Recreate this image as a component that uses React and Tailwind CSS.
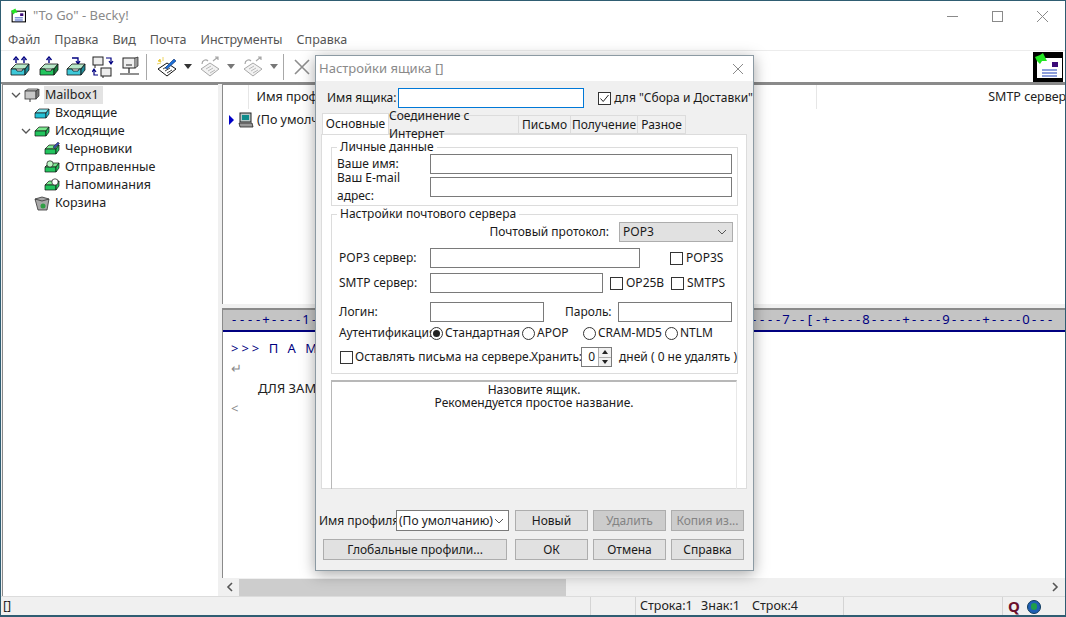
import { Fragment } from "react";

const rulerText = "----+----1----+----2----+----3----+----4----+----5----+----6----+----7--[-+----8----+----9----+----0---";

// 3d tray icon used in the folder tree
function Tray({ color = "#22c55e", top = "#7be88f", children }) {
  return (
    <svg width="16" height="14" viewBox="0 0 16 14" className="shrink-0">
      <path d="M1 7 L5 3 H15 L12 7 Z" fill={top} stroke="#111" strokeWidth="0.7" />
      <path d="M1 7 H12 V12 H1 Z" fill={color} stroke="#111" strokeWidth="0.7" />
      <path d="M12 7 L15 3 V8 L12 12 Z" fill={color} stroke="#111" strokeWidth="0.7" />
      {children}
    </svg>
  );
}

function Chevron() {
  return (
    <svg width="10" height="10" viewBox="0 0 10 10" className="shrink-0">
      <path d="M1 3 L5 7 L9 3" fill="none" stroke="#555" strokeWidth="1.3" />
    </svg>
  );
}

function SmallChevron() {
  return (
    <svg width="10" height="6" viewBox="0 0 10 6">
      <path d="M1 1 L5 5 L9 1" fill="none" stroke="#555" strokeWidth="1" />
    </svg>
  );
}

function ServerIcon({ w = 16 }) {
  return (
    <svg width={w} height={w} viewBox="0 0 16 16" className="shrink-0">
      <path d="M1 4 H12 L14 2 H4 Z" fill="#d8d8d8" stroke="#333" strokeWidth="0.7" />
      <rect x="1" y="4" width="11" height="8" fill="#c8c8c8" stroke="#333" strokeWidth="0.8" />
      <path d="M12 4 L15 2 V9 L12 12 Z" fill="#777" stroke="#333" strokeWidth="0.7" />
      <path d="M6 12 V15" stroke="#333" />
    </svg>
  );
}

function ToolTray({ left, right, arrows }) {
  return (
    <svg width="24" height="22" viewBox="0 0 24 22">
      {arrows}
      <path d="M2 13 L7 8 H20 L16 13 Z" fill="#b8e8c8" stroke="#111" strokeWidth="0.8" />
      <path d="M2 13 H7 L8 15 H13 L14 13 H16 V19 H2 Z" fill={left} stroke="#111" strokeWidth="0.8" />
      <path d="M16 13 L20 8 V14 L16 19 Z" fill={right} stroke="#111" strokeWidth="0.8" />
    </svg>
  );
}

function Up({ x }) {
  return <path d={`M${x} 7 V3 M${x - 2.5} 4 L${x} 1 L${x + 2.5} 4`} fill="none" stroke="#000080" strokeWidth="1.4" />;
}

function PairIcon() {
  return (
    <svg width="22" height="24" viewBox="0 0 22 24">
      <rect x="1" y="2" width="10" height="8" fill="#eee" stroke="#222" />
      <rect x="9" y="13" width="10" height="8" fill="#eee" stroke="#222" />
      <path d="M3 10 V13 M11 21 V23" stroke="#222" />
      <path d="M14 3 H19 V8 M17 6 L19 9 L21 6" fill="none" stroke="#000080" strokeWidth="1.2" />
      <path d="M6 20 H2 V15 M0 17 L2 14 L4 17" fill="none" stroke="#000080" strokeWidth="1.2" />
    </svg>
  );
}

function NetIcon() {
  return (
    <svg width="20" height="22" viewBox="0 0 20 22">
      <rect x="3" y="2" width="12" height="10" fill="#eee" stroke="#222" />
      <path d="M15 2 L18 1 V10 L15 12" fill="#999" stroke="#222" strokeWidth="0.7" />
      <path d="M6 9 H12 M9 12 V17 M0 18 H19" stroke="#222" strokeWidth="1.2" />
    </svg>
  );
}

function NoteIcon({ dim, pen }) {
  const c = dim ? "#a8a8a8" : "#111";
  return (
    <svg width="22" height="22" viewBox="0 0 22 22">
      <path d="M2 13 L11 7 L20 13 L11 20 Z" fill={dim ? "#f2f2f2" : "#fff"} stroke={c} />
      <path d="M7 13 L12 10 M9 15 L14 12 M11 17 L16 14" stroke={c} strokeWidth="0.8" />
      {pen && <path d="M9 12 L18 3 L20 5 L11 13 Z" fill="#1d6fd6" stroke="#0b2f6b" strokeWidth="0.6" />}
      {pen && <path d="M4 3 L5 6 L2 5 Z M7 1 L7 5 M1 8 L5 7" stroke="#e8c93a" fill="#e8c93a" strokeWidth="0.8" />}
      {dim && <path d="M3 8 C3 4 7 3 9 5 M14 5 L19 1 M16 1 H19 V4" fill="none" stroke="#a8a8a8" strokeWidth="1.2" />}
    </svg>
  );
}

function Caret({ dim }) {
  return <div className={`ml-[6px] w-0 h-0 border-x-[4px] border-x-transparent border-t-[5px] ${dim ? "border-t-[#777]" : "border-t-[#333]"}`} />;
}

function Separator() {
  return <div className="w-px h-[26px] bg-[#a8a8a8]" />;
}

function EnvelopeLogo({ size }) {
  return (
    <svg width={size} height={size} viewBox="0 0 30 30">
      <rect x="4" y="6" width="25" height="20" fill="#fff" stroke="#000" strokeWidth={size < 20 ? 2 : 0} />
      <rect x="19" y="10" width="6" height="5" fill="#3b0a78" />
      <path d="M9 18 H24 M9 21 H24 M9 24 H24" stroke="#1d3fb8" strokeWidth="1.2" />
      <path d="M2 5 L7 3 L10 1 L12 5 L14 9 L9 9 L7 12 L4 9 Z" fill="#22e622" />
    </svg>
  );
}

function TreeRow({ indent, open, icon, children, selected }) {
  return (
    <div className={`h-[18px] flex items-center ${indent}`}>
      <div className="w-[16px] flex justify-center">{open && <Chevron />}</div>
      {icon}
      <span className={`ml-[4px] px-[1px] leading-[18px] ${selected ? "bg-[#e3e3e3] pr-[4px]" : ""}`}>{children}</span>
    </div>
  );
}

function Field({ className = "" }) {
  return <div className={`h-[20px] border border-[#7a7a7a] bg-white shrink-0 ${className}`} />;
}

function Check({ checked }) {
  return (
    <div className="w-[13px] h-[13px] border border-[#333] bg-white shrink-0 flex items-center justify-center">
      {checked && (
        <svg width="11" height="11" viewBox="0 0 11 11">
          <path d="M1.5 5.5 L4.2 8.5 L9.5 2" fill="none" stroke="#222" strokeWidth="1" />
        </svg>
      )}
    </div>
  );
}

function Radio({ checked }) {
  return (
    <div className="w-[13px] h-[13px] rounded-full border border-[#333] bg-white shrink-0 flex items-center justify-center">
      {checked && <div className="w-[7px] h-[7px] rounded-full bg-[#222]" />}
    </div>
  );
}

function Btn({ children, disabled, className = "w-[73px]" }) {
  return (
    <div className={`h-[21px] border border-[#adadad] flex items-center justify-center shrink-0 ${disabled ? "bg-[#cccccc] text-[#838383]" : "bg-[#e1e1e1]"} ${className}`}>
      {children}
    </div>
  );
}

function Group({ title, className, children }) {
  return (
    <div className={`relative border border-[#dcdcdc] ${className}`}>
      <span className="absolute left-[5px] top-[-8px] bg-white px-[3px] leading-[14px]">{title}</span>
      {children}
    </div>
  );
}

function Dialog() {
  return (
    <div className="absolute left-[314px] top-[54px] w-[439px] h-[516px] border border-[#8c9aa3] bg-[#f0f0f0] shadow-[0_3px_14px_rgba(0,0,0,0.35)] text-[12px] text-[#1a1a1a]">
      <div className="h-[25px] bg-white flex items-center justify-between pl-[3px] pr-[9px] text-[#8a8a8a] text-[13px]">
        <span>Настройки ящика []</span>
        <svg width="12" height="12" viewBox="0 0 12 12">
          <path d="M1 1 L11 11 M11 1 L1 11" stroke="#8a8a8a" strokeWidth="1" />
        </svg>
      </div>

      <div className="flex items-center h-[20px] mt-[7px] pl-[11px]">
        <span className="w-[72px]">Имя ящика:</span>
        <div className="w-[188px] h-[20px] border border-[#0078d7] bg-white" />
        <div className="ml-[14px]"><Check checked /></div>
        <span className="ml-[3px] whitespace-nowrap">для "Сбора и Доставки"</span>
      </div>

      <div className="flex items-end h-[20px] mt-[6px] pl-[6px]">
        <div className="w-[67px] h-[21px] bg-white border border-b-0 border-[#dcdcdc] flex items-center justify-center relative z-10">Основные</div>
        <div className="w-[130px] h-[19px] bg-[#f0f0f0] border border-l-0 border-[#dcdcdc] flex items-center justify-center">Соединение с Интернет</div>
        <div className="w-[52px] h-[19px] bg-[#f0f0f0] border border-l-0 border-[#dcdcdc] flex items-center justify-center">Письмо</div>
        <div className="w-[67px] h-[19px] bg-[#f0f0f0] border border-l-0 border-[#dcdcdc] flex items-center justify-center">Получение</div>
        <div className="w-[48px] h-[19px] bg-[#f0f0f0] border border-l-0 border-[#dcdcdc] flex items-center justify-center">Разное</div>
      </div>

      <div className="ml-[5px] w-[426px] h-[355px] bg-white border border-[#dcdcdc] pt-[12px] pl-[9px]">
        <Group title="Личные данные" className="w-[407px] h-[59px] pl-[5px] pt-[6px]">
          <div className="flex items-center h-[20px]">
            <span className="w-[93px]">Ваше имя:</span>
            <Field className="w-[302px]" />
          </div>
          <div className="flex items-center h-[20px] mt-[3px]">
            <span className="w-[93px]">Ваш E-mail адрес:</span>
            <Field className="w-[302px]" />
          </div>
        </Group>

        <Group title="Настройки почтового сервера" className="w-[407px] h-[160px] mt-[8px] pl-[7px] pt-[7px]">
          <div className="flex items-center justify-end h-[20px] pr-[4px]">
            <span className="mr-[10px]">Почтовый протокол:</span>
            <div className="w-[114px] h-[20px] bg-[#e1e1e1] border border-[#adadad] flex items-center justify-between pl-[3px] pr-[5px]">
              POP3 <SmallChevron />
            </div>
          </div>
          <div className="flex items-center h-[20px] mt-[6px]">
            <span className="w-[91px]">POP3 сервер:</span>
            <Field className="w-[210px]" />
            <div className="ml-[30px]"><Check /></div>
            <span className="ml-[3px]">POP3S</span>
          </div>
          <div className="flex items-center h-[20px] mt-[5px]">
            <span className="w-[91px]">SMTP сервер:</span>
            <Field className="w-[173px]" />
            <div className="ml-[7px]"><Check /></div>
            <span className="ml-[3px] w-[45px]">OP25B</span>
            <Check />
            <span className="ml-[3px]">SMTPS</span>
          </div>
          <div className="flex items-center h-[20px] mt-[9px]">
            <span className="w-[91px]">Логин:</span>
            <Field className="w-[114px]" />
            <span className="w-[74px] pl-[21px]">Пароль:</span>
            <Field className="w-[114px]" />
          </div>
          <div className="flex items-center h-[16px] mt-[3px]">
            <span className="w-[91px] whitespace-nowrap">Аутентификация:</span>
            <Radio checked />
            <span className="ml-[2px] w-[77px]">Стандартная</span>
            <Radio />
            <span className="ml-[2px] w-[46px]">APOP</span>
            <Radio />
            <span className="ml-[2px] w-[67px]">CRAM-MD5</span>
            <Radio />
            <span className="ml-[2px]">NTLM</span>
          </div>
          <div className="flex items-center h-[20px] mt-[6px] pl-[1px]">
            <Check />
            <span className="ml-[2px] w-[176px] whitespace-nowrap">Оставлять письма на сервере.</span>
            <span className="w-[50px]">Хранить:</span>
            <div className="w-[39px] h-[20px] border border-[#7a7a7a] bg-white flex justify-end">
              <span className="pr-[3px] leading-[17px]">0</span>
              <div className="w-[13px] flex flex-col bg-[#f0f0f0] border-l border-[#adadad]">
                <div className="flex-1 flex items-center justify-center border-b border-[#adadad]">
                  <div className="w-0 h-0 border-x-[3px] border-x-transparent border-b-[4px] border-b-[#222]" />
                </div>
                <div className="flex-1 flex items-center justify-center">
                  <div className="w-0 h-0 border-x-[3px] border-x-transparent border-t-[4px] border-t-[#222]" />
                </div>
              </div>
            </div>
            <span className="ml-[7px] whitespace-nowrap">дней ( 0 не удалять )</span>
          </div>
        </Group>

        <div className="w-[406px] h-[109px] mt-[6px] border-t-2 border-l border-r border-[#b8b8b8] border-r-[#e8e8e8] text-center leading-[13px] pt-[1px]">
          <div>Назовите ящик.</div>
          <div>Рекомендуется простое название.</div>
        </div>
      </div>

      <div className="flex items-center h-[21px] mt-[21px] pl-[3px]">
        <span className="w-[77px] whitespace-nowrap">Имя профиля:</span>
        <div className="w-[113px] h-[21px] bg-white border border-[#7a7a7a] flex items-center justify-between pl-[2px] pr-[4px]">
          (По умолчанию) <SmallChevron />
        </div>
        <div className="flex gap-[5px] ml-[6px]">
          <Btn>Новый</Btn>
          <Btn disabled>Удалить</Btn>
          <Btn disabled>Копия из...</Btn>
        </div>
      </div>
      <div className="flex items-center h-[21px] mt-[8px] pl-[7px]">
        <Btn className="w-[184px]">Глобальные профили...</Btn>
        <div className="flex gap-[5px] ml-[8px]">
          <Btn>ОК</Btn>
          <Btn>Отмена</Btn>
          <Btn>Справка</Btn>
        </div>
      </div>
    </div>
  );
}

export default function App() {
  return (
    <div className="relative w-[1066px] h-[617px] overflow-hidden bg-[#f0f0f0] border border-[#2f5d72] border-b-2 font-['Noto_Sans','Open_Sans',sans-serif] text-[12px] text-[#222]">
      {/* title bar */}
      <div className="h-[29px] bg-white flex items-center pl-[9px]">
        <EnvelopeLogo size={16} />
        <span className="ml-[7px] text-[13px] text-[#8a8a8a]">"To Go" - Becky!</span>
        <div className="ml-auto flex items-center">
          <svg width="45" height="14" viewBox="0 0 45 14"><path d="M17 7.5 H28" stroke="#8a8a8a" /></svg>
          <svg width="45" height="14" viewBox="0 0 45 14"><rect x="17.5" y="2.5" width="10" height="10" fill="none" stroke="#8a8a8a" /></svg>
          <svg width="45" height="14" viewBox="0 0 45 14"><path d="M17 2 L28 13 M28 2 L17 13" stroke="#8a8a8a" /></svg>
        </div>
      </div>

      {/* menu */}
      <div className="h-[20px] bg-white flex items-center pl-[7px] gap-[14px] text-[#555] text-[12.5px]">
        <span>Файл</span><span>Правка</span><span>Вид</span><span>Почта</span><span>Инструменты</span><span>Справка</span>
      </div>

      {/* toolbar */}
      <div className="h-[34px] bg-white border-t border-t-[#ececec] border-b-2 border-b-[#8a8a8a] flex items-center pl-[8px]">
        <ToolTray left="#3ec8d8" right="#1e8a96" arrows={<><Up x={7} /><Up x={15} /></>} />
        <div className="ml-[5px]"><ToolTray left="#22c55e" right="#15803d" arrows={<Up x={11} />} /></div>
        <div className="ml-[3px]"><ToolTray left="#3ec8d8" right="#1e8a96" arrows={<path d="M7 2 H13 V7 M11 5 L13 8 L15 5" fill="none" stroke="#000080" strokeWidth="1.3" />} /></div>
        <div className="ml-[3px]"><PairIcon /></div>
        <div className="ml-[6px]"><NetIcon /></div>
        <div className="ml-[6px]"><Separator /></div>
        <div className="ml-[9px]"><NoteIcon pen /></div>
        <Caret />
        <div className="ml-[7px]"><NoteIcon dim /></div>
        <Caret dim />
        <div className="ml-[7px]"><NoteIcon dim /></div>
        <Caret dim />
        <div className="ml-[5px]"><Separator /></div>
        <svg width="18" height="16" viewBox="0 0 18 16" className="ml-[9px]">
          <path d="M2 1 L16 15 M16 1 L2 15" stroke="#8e8e8e" strokeWidth="1.6" />
        </svg>
        <div className="ml-auto mr-[2px] w-[30px] h-[30px] bg-black">
          <EnvelopeLogo size={30} />
        </div>
      </div>

      <div className="flex h-[512px]">
        {/* folder tree */}
        <div className="w-[216px] ml-px bg-white border-l border-t border-[#8a8a8a] text-[12.5px] pt-[1px] shrink-0">
          <TreeRow open indent="pl-[5px]" selected icon={<ServerIcon />}>Mailbox1</TreeRow>
          <TreeRow indent="pl-[15px]" icon={<Tray color="#22c1d6" top="#7fe6ef" />}>Входящие</TreeRow>
          <TreeRow open indent="pl-[15px]" icon={<Tray />}>Исходящие</TreeRow>
          <TreeRow indent="pl-[25px]" icon={<Tray><path d="M9 5 L14 0 L15.5 1.5 L10.5 6.5 Z" fill="#3949ab" stroke="#111" strokeWidth="0.4" /></Tray>}>Черновики</TreeRow>
          <TreeRow indent="pl-[25px]" icon={<Tray><circle cx="6" cy="4" r="3.2" fill="#bdf5c5" stroke="#111" strokeWidth="0.7" /></Tray>}>Отправленные</TreeRow>
          <TreeRow indent="pl-[25px]" icon={<Tray><circle cx="11" cy="4" r="3.2" fill="#fff" stroke="#111" strokeWidth="0.7" /></Tray>}>Напоминания</TreeRow>
          <TreeRow indent="pl-[15px]" icon={
            <svg width="16" height="15" viewBox="0 0 16 15" className="shrink-0">
              <path d="M1 3 L8 1 L15 3 L13 14 H4 Z" fill="#a8a8a8" stroke="#333" strokeWidth="0.8" />
              <path d="M1 3 L8 5 L15 3" fill="none" stroke="#333" strokeWidth="0.8" />
              <circle cx="9" cy="10" r="2.5" fill="#2f9e44" />
            </svg>
          }>Корзина</TreeRow>
        </div>

        {/* right side */}
        <div className="w-[845px] ml-[4px] flex flex-col shrink-0">
          <div className="h-[220px] bg-white border-l border-t border-[#8a8a8a] text-[12.5px] shrink-0">
            <div className="h-[24px] flex items-center">
              <div className="w-[33px] h-full border-r border-[#e6e6e6]" />
              <span className="pl-[7px] w-[560px] whitespace-nowrap">Имя профиля</span>
              <div className="w-[560px] -ml-[560px]" />
              <div className="ml-[-7px] w-[525px] h-full" />
              <div className="absolute left-[815px] top-[84px] w-px h-[24px] bg-[#e6e6e6]" />
              <span className="pl-[7px] w-[100px] -ml-[11px] whitespace-nowrap">SMTP сервер</span>
              <div className="w-px h-full bg-[#e6e6e6]" />
            </div>
            <div className="flex items-center h-[20px] mt-[1px] pl-[6px]">
              <div className="w-0 h-0 border-y-[5px] border-y-transparent border-l-[5px] border-l-[#0000c8]" />
              <svg width="16" height="16" viewBox="0 0 16 16" className="ml-[4px]">
                <rect x="2" y="1" width="11" height="9" fill="#b8c8c8" stroke="#222" />
                <rect x="4" y="3" width="7" height="5" fill="#0e8c8c" />
                <path d="M1 11 H14 L15 15 H2 Z" fill="#999" stroke="#222" strokeWidth="0.8" />
              </svg>
              <span className="ml-[3px] whitespace-nowrap">(По умолчанию)</span>
            </div>
          </div>

          {/* ruler + editor */}
          <div className="h-[270px] mt-[4px] bg-white border-l border-t-2 border-[#8a8a8a] flex flex-col shrink-0 overflow-hidden">
            <div className="h-[22px] bg-[#c4c4c4] border-b-2 border-b-[#000080] flex items-center pl-[7px] text-[#000080] text-[13px] shrink-0">
              {rulerText.split("").map((ch, i) => (
                <span key={i} className="w-[8px] shrink-0 text-center">{ch}</span>
              ))}
            </div>
            <div className="pl-[8px] pt-[6px] text-[13px] leading-[20px] tracking-[3px]">
              <div className="text-[#000080] whitespace-nowrap">{">>> П А М Я Т К А"}</div>
              <div className="text-[#8a8a8a] tracking-normal">↵</div>
              <div className="pl-[27px] tracking-normal whitespace-nowrap">ДЛЯ ЗАМЕТОК</div>
              <div className="text-[#8a8a8a] tracking-normal">&lt;</div>
            </div>
          </div>

          {/* horizontal scrollbar */}
          <div className="h-[18px] bg-[#f0f0f0] flex items-center shrink-0">
            <svg width="17" height="12" viewBox="0 0 17 12"><path d="M10 2 L6 6 L10 10" fill="none" stroke="#555" strokeWidth="1.6" /></svg>
            <div className="w-[327px] h-[17px] bg-[#cdcdcd]" />
            <svg width="17" height="12" viewBox="0 0 17 12" className="ml-auto mr-[3px]"><path d="M6 2 L10 6 L6 10" fill="none" stroke="#555" strokeWidth="1.6" /></svg>
          </div>
        </div>
      </div>

      {/* status bar */}
      <div className="h-[20px] border-t border-[#dcdcdc] flex items-center text-[12.5px] bg-[#f0f0f0]">
        <span className="pl-[2px] w-[589px]">[]</span>
        <div className="w-px h-full bg-[#d4d4d4] ml-[0px]" />
        <div className="w-[44px]" />
        <div className="w-px h-full bg-[#d4d4d4]" />
        <span className="pl-[4px] w-[65px]">Строка:1</span>
        <span className="w-[51px]">Знак:1</span>
        <span className="w-[91px]">Строк:4</span>
        <div className="w-px h-full bg-[#d4d4d4]" />
        <div className="w-[158px]" />
        <div className="w-px h-full bg-[#d4d4d4]" />
        <span className="ml-[5px] w-[18px] font-bold text-[15px] text-[#6b0f2b] leading-none">Q</span>
        <div className="w-[14px] h-[14px] rounded-full bg-[#1f5fb4] border border-[#0e3a5c] flex items-center justify-center ml-[1px]">
          <div className="w-[6px] h-[7px] rounded-full bg-[#1f9e4a]" />
        </div>
      </div>

      <Dialog />
    </div>
  );
}
